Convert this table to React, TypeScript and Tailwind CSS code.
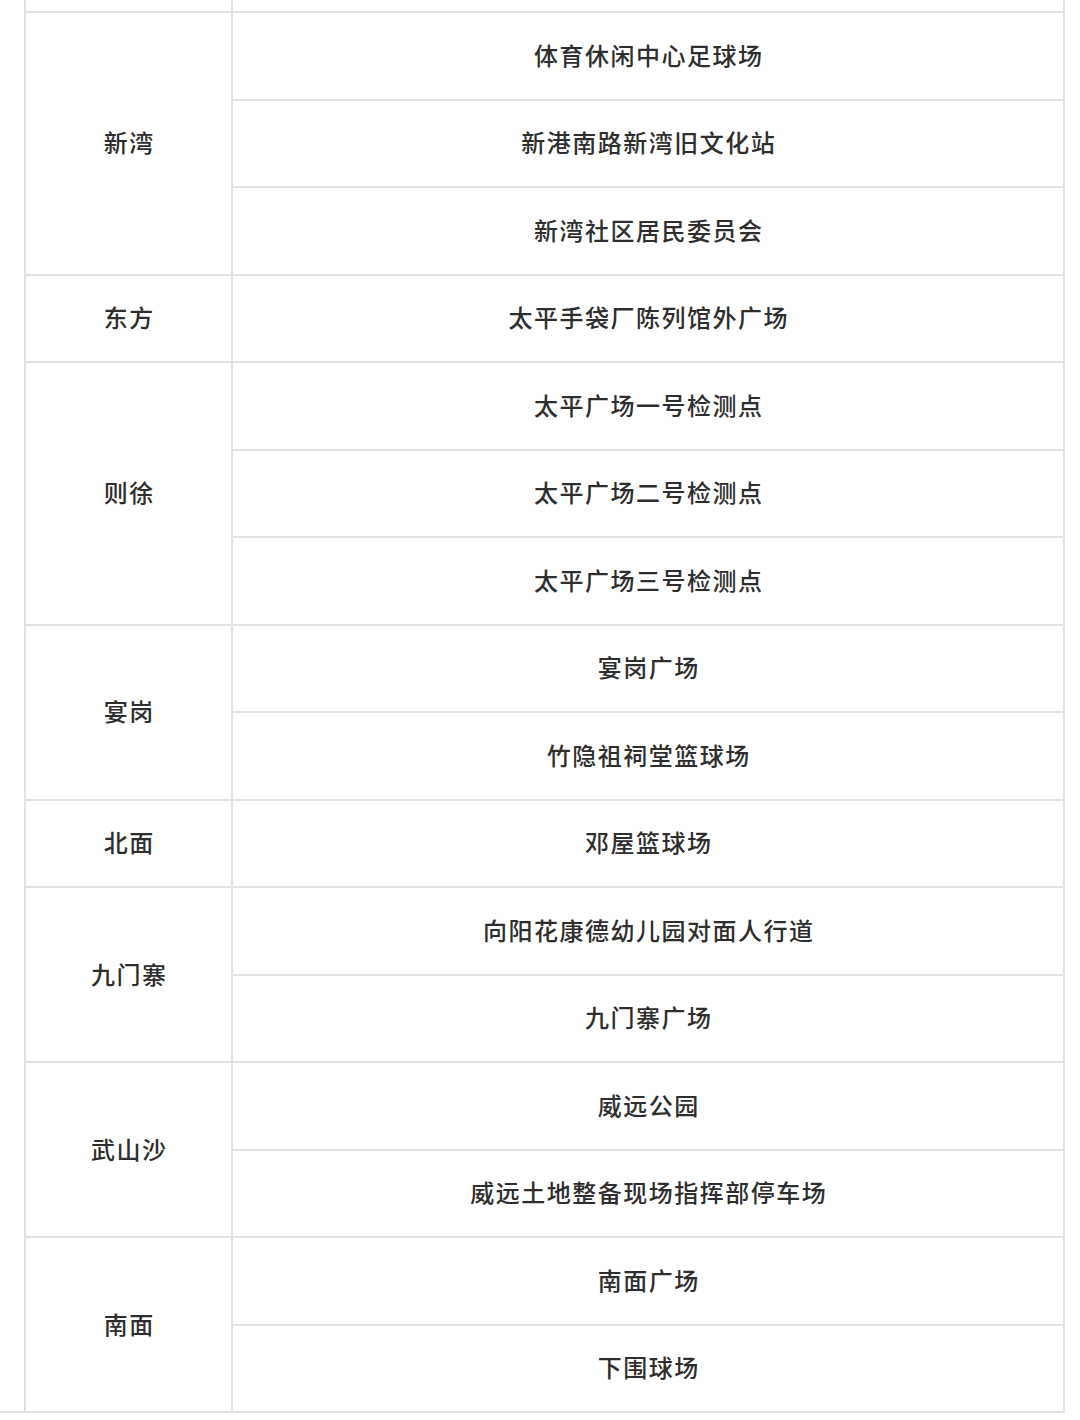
import React from "react";

type Group = { area: string; sites: string[] };

const groups: Group[] = [
  { area: "新湾", sites: ["体育休闲中心足球场", "新港南路新湾旧文化站", "新湾社区居民委员会"] },
  { area: "东方", sites: ["太平手袋厂陈列馆外广场"] },
  { area: "则徐", sites: ["太平广场一号检测点", "太平广场二号检测点", "太平广场三号检测点"] },
  { area: "宴岗", sites: ["宴岗广场", "竹隐祖祠堂篮球场"] },
  { area: "北面", sites: ["邓屋篮球场"] },
  { area: "九门寨", sites: ["向阳花康德幼儿园对面人行道", "九门寨广场"] },
  { area: "武山沙", sites: ["威远公园", "威远土地整备现场指挥部停车场"] },
  { area: "南面", sites: ["南面广场", "下围球场"] },
];

const textCls =
  "text-[24px] leading-none font-medium tracking-[1.5px] pl-[1.5px] pb-[2px] text-[#2e2e2e] [font-family:'Noto_Sans_CJK_SC','Noto_Sans',sans-serif]";

export default function App() {
  return (
    <div className="w-[1080px] h-[1420px] bg-white">
      <div className="w-[1065px] border-b-2 border-[#e2e2e2]">
        <div className="ml-[24px] w-[1041px] bg-[#e2e2e2] px-[2px] flex flex-col gap-[2px]">
          <div className="grid grid-cols-[205px_830px] gap-[2px] h-[11px]">
            <div className="bg-white" />
            <div className="bg-white" />
          </div>
          {groups.map((g) => (
            <div key={g.area} className="grid grid-cols-[205px_830px] gap-[2px]">
              <div className="bg-white flex items-center justify-center">
                <span className={textCls}>{g.area}</span>
              </div>
              <div className="flex flex-col gap-[2px]">
                {g.sites.map((s) => (
                  <div key={s} className="bg-white h-[85.5px] flex items-center justify-center">
                    <span className={textCls}>{s}</span>
                  </div>
                ))}
              </div>
            </div>
          ))}
        </div>
      </div>
    </div>
  );
}
